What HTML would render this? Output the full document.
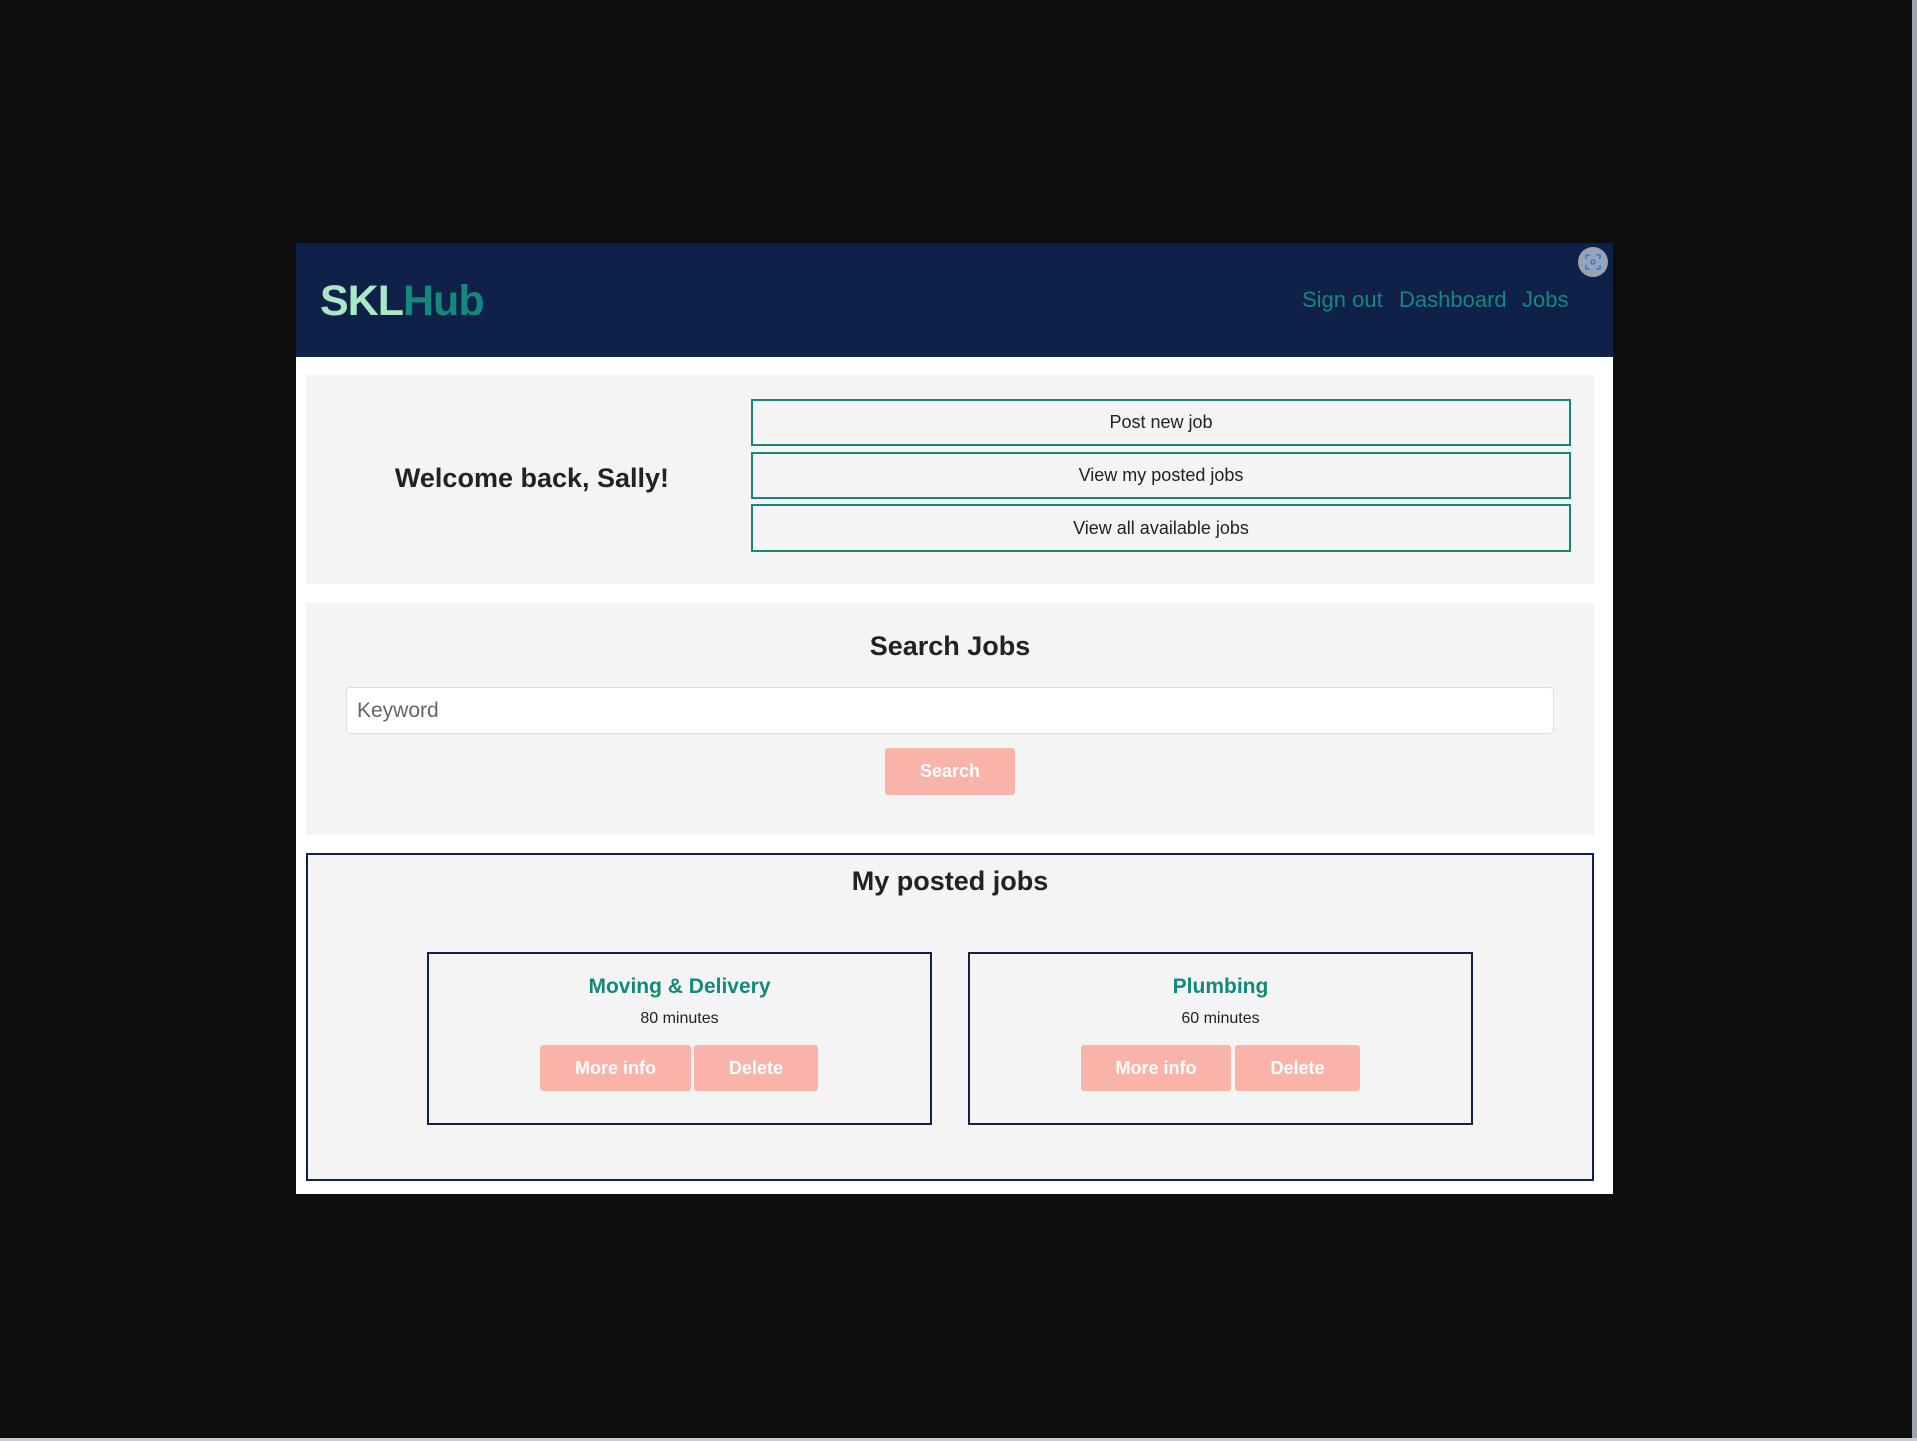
<!DOCTYPE html>
<html><head><meta charset="utf-8"><style>
*{box-sizing:border-box;margin:0;padding:0}
body{width:1917px;height:1441px;background:#0e0e0e;position:relative;overflow:hidden;font-family:"Liberation Sans",sans-serif}
.a{position:absolute}
.frame{left:296px;top:243px;width:1317px;height:951px;background:#fff}
.hdr{left:296px;top:243px;width:1317px;height:114px;background:#0f2148}
.panel{background:#f4f4f4}
.btn{position:absolute;border:2px solid #14897b;background:#f4f4f4;color:#222;font-size:18px;display:flex;align-items:center;justify-content:center}
.pk{position:absolute;background:#f9b3a8;color:#fff;font-weight:bold;font-size:18px;display:flex;align-items:center;justify-content:center;border-radius:3px}
.card{position:absolute;border:2px solid #0f2148;background:#f4f4f4}
.ct{position:absolute;left:0;right:0;text-align:center;color:#14897b;font-size:21px;font-weight:bold}
.cm{position:absolute;left:0;right:0;text-align:center;color:#222;font-size:16px}
.h{position:absolute;text-align:center;font-size:27px;font-weight:bold;color:#222}
.nav{position:absolute;top:287px;font-size:22px;color:#14897b;white-space:nowrap}
</style></head><body>
<div class="a frame"></div>
<div class="a hdr"></div>
<div class="a" style="left:320px;top:277px;font-size:43px;font-weight:bold;letter-spacing:-1px"><span style="color:#a8e8c4">SKL</span><span style="color:#14897b">Hub</span></div>
<div class="nav" style="left:1302px">Sign out</div>
<div class="nav" style="left:1399px">Dashboard</div>
<div class="nav" style="left:1522px">Jobs</div>
<div class="a" style="left:1578px;top:247px;width:30px;height:30px;border-radius:50%;background:#9aa3b5"></div>
<svg class="a" style="left:1585px;top:254px" width="16" height="16" viewBox="0 0 16 16" fill="none" stroke="#2a7de1" stroke-width="1.6"><path d="M1 5V1h4M11 1h4v4M15 11v4h-4M5 15H1v-4"/><circle cx="8" cy="8" r="2"/></svg>

<div class="a panel" style="left:306px;top:375px;width:1288px;height:209px"></div>
<div class="h" style="left:306px;top:463px;width:452px">Welcome back, Sally!</div>
<div class="btn" style="left:751px;top:399px;width:820px;height:47px">Post new job</div>
<div class="btn" style="left:751px;top:452px;width:820px;height:47px">View my posted jobs</div>
<div class="btn" style="left:751px;top:504px;width:820px;height:48px">View all available jobs</div>

<div class="a panel" style="left:306px;top:603px;width:1288px;height:232px"></div>
<div class="h" style="left:306px;top:631px;width:1288px">Search Jobs</div>
<div class="a" style="left:346px;top:687px;width:1208px;height:47px;background:#fff;border:1px solid #ddd;border-radius:4px;font-size:21px;color:#666;padding:11px 10px">Keyword</div>
<div class="pk" style="left:885px;top:748px;width:130px;height:47px">Search</div>

<div class="a panel" style="left:306px;top:853px;width:1288px;height:328px;border:2px solid #0f2148"></div>
<div class="h" style="left:306px;top:866px;width:1288px">My posted jobs</div>

<div class="card" style="left:427px;top:952px;width:505px;height:173px">
<div class="ct" style="top:21px">Moving &amp; Delivery</div>
<div class="cm" style="top:56px">80 minutes</div>
</div>
<div class="pk" style="left:540px;top:1045px;width:151px;height:46px">More info</div>
<div class="pk" style="left:694px;top:1045px;width:124px;height:46px">Delete</div>

<div class="card" style="left:968px;top:952px;width:505px;height:173px">
<div class="ct" style="top:21px">Plumbing</div>
<div class="cm" style="top:56px">60 minutes</div>
</div>
<div class="pk" style="left:1081px;top:1045px;width:150px;height:46px">More info</div>
<div class="pk" style="left:1235px;top:1045px;width:125px;height:46px">Delete</div>

<div class="a" style="left:1912px;top:0;width:5px;height:1441px;background:#9ea4ad"></div>
<div class="a" style="left:0;top:1438px;width:1917px;height:3px;background:#c8ccd2"></div>
</body></html>
